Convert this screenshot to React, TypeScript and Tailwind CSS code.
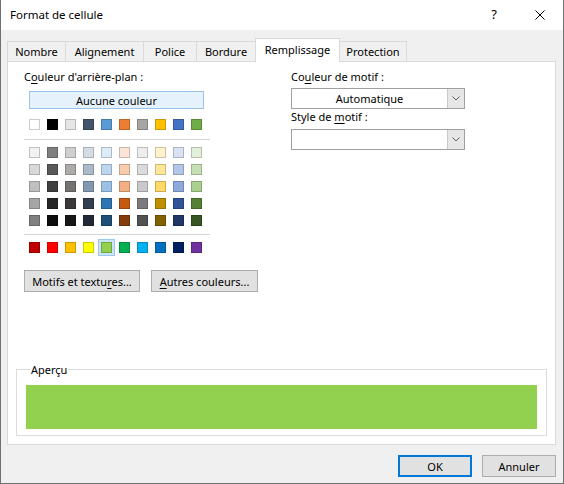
import React from 'react';

const FONT = { fontFamily: '"Segoe UI", "Noto Sans", Arial, sans-serif' };

const TABS = [
  { label: 'Nombre', width: 'w-[59px]' },
  { label: 'Alignement', width: 'w-[79px]' },
  { label: 'Police', width: 'w-[54px]' },
  { label: 'Bordure', width: 'w-[60px]' },
  { label: 'Remplissage', width: 'w-[85px]' },
  { label: 'Protection', width: 'w-[68px]' }
];

const ACTIVE_TAB = 'Remplissage';

const THEME_TOP = ['#FFFFFF', '#000000', '#E7E6E6', '#44546A', '#5B9BD5', '#ED7D31', '#A5A5A5', '#FFC000', '#4472C4', '#70AD47'];

const THEME_SHADES = [
  ['#F2F2F2', '#7F7F7F', '#D0CECE', '#D6DCE4', '#DDEBF7', '#FCE4D6', '#EDEDED', '#FFF2CC', '#D9E1F2', '#E2EFDA'],
  ['#D9D9D9', '#595959', '#AEAAAA', '#ACB9CA', '#BDD7EE', '#F8CBAD', '#DBDBDB', '#FFE699', '#B4C6E7', '#C6E0B4'],
  ['#BFBFBF', '#404040', '#757171', '#8497B0', '#9BC2E6', '#F4B084', '#C9C9C9', '#FFD966', '#8EA9DB', '#A9D08E'],
  ['#A6A6A6', '#262626', '#3A3838', '#333F4F', '#2F75B5', '#C65911', '#7B7B7B', '#BF8F00', '#305496', '#548235'],
  ['#808080', '#0D0D0D', '#161616', '#222B35', '#1F4E78', '#833C0C', '#525252', '#806000', '#203764', '#375623']
];

const STANDARD = ['#C00000', '#FF0000', '#FFC000', '#FFFF00', '#92D050', '#00B050', '#00B0F0', '#0070C0', '#002060', '#7030A0'];

const SELECTED = '#92D050';

export default function App() {
  return (
    <div
      className="flex h-[484px] w-[564px] flex-col overflow-hidden border-x border-b border-[#707070] bg-[#f0f0f0] text-[11px] text-black"
      style={FONT}
    >
      <TitleBar />

      <div className="ml-[6px] mt-[8px] flex items-end">
        {TABS.map((tab, index) => {
          const active = tab.label === ACTIVE_TAB;
          return (
            <div
              key={tab.label}
              className={[
                'relative flex items-center justify-center border border-b-0 border-[#d9d9d9] leading-none',
                tab.width,
                index > 0 ? '-ml-px' : '',
                active ? 'z-10 -mb-px h-[24px] bg-white pb-[2px]' : 'h-[20px] bg-[#f0f0f0]'
              ].join(' ')}
            >
              {tab.label}
            </div>
          );
        })}
      </div>

      <section className="ml-[6px] flex h-[384px] w-[549px] flex-col border border-[#d9d9d9] bg-white">
        <div className="flex pl-[16px] pt-[7px]">
          <BackgroundColumn />
          <PatternColumn />
        </div>

        <fieldset className="mx-[8px] mb-[8px] mt-auto border border-[#dcdcdc] px-[9px] pb-[6px]">
          <legend className="ml-[4px] px-px leading-[15px]">Aperçu</legend>
          <div className="mt-[8px] h-[44px] bg-[#92D050]" />
        </fieldset>
      </section>

      <div className="mt-[10px] flex justify-end gap-[10px] pr-[7px]">
        <button type="button" className="h-[22px] w-[74px] border-2 border-[#0078d7] bg-[#e1e1e1] leading-none">
          OK
        </button>
        <button type="button" className="h-[22px] w-[74px] border border-[#adadad] bg-[#e1e1e1] leading-none">
          Annuler
        </button>
      </div>
    </div>
  );
}

function TitleBar() {
  return (
    <header className="flex h-[30px] items-center bg-white">
      <span className="ml-[9px] flex-1 text-[11.5px]">Format de cellule</span>
      <span className="flex h-[30px] w-[46px] items-center justify-center text-[13px]">?</span>
      <span className="flex h-[30px] w-[46px] items-center justify-center">
        <svg width="10" height="10" viewBox="0 0 10 10" fill="none" stroke="#000" strokeWidth="1">
          <path d="M0.5 0.5 L9.5 9.5 M9.5 0.5 L0.5 9.5" />
        </svg>
      </span>
    </header>
  );
}

function BackgroundColumn() {
  return (
    <div className="flex w-[186px] flex-col">
      <p className="h-[16px] leading-[16px]">
        C<u className="underline-offset-2">o</u>uleur d'arrière-plan :
      </p>

      <div className="ml-[5px] mt-[6px] flex h-[18px] w-[175px] items-center justify-center border border-[#99c3ea] bg-[#e5f1fb] leading-none">
        Aucune couleur
      </div>

      <SwatchRow colors={THEME_TOP} className="mt-[10px]" />

      <div className="mt-[9px] h-px bg-[#d4d4d4]" />

      <div className="mt-[7px] flex flex-col gap-[6px]">
        {THEME_SHADES.map((row, index) => (
          <SwatchRow key={index} colors={row} />
        ))}
      </div>

      <div className="mt-[8px] h-px bg-[#d4d4d4]" />

      <SwatchRow colors={STANDARD} className="mt-[7px]" />

      <div className="mt-[17px] flex gap-[11px]">
        <button type="button" className="h-[22px] w-[116px] shrink-0 border border-[#adadad] bg-[#e1e1e1] leading-none">
          Motifs et textu<u className="underline-offset-2">r</u>es...
        </button>
        <button type="button" className="h-[22px] w-[107px] shrink-0 border border-[#adadad] bg-[#e1e1e1] leading-none">
          <u className="underline-offset-2">A</u>utres couleurs...
        </button>
      </div>
    </div>
  );
}

function SwatchRow({ colors, className = '' }: { colors: string[]; className?: string }) {
  return (
    <div className={['ml-[5px] flex h-[11px] gap-[7px]', className].join(' ')}>
      {colors.map((color, index) => {
        const selected = color === SELECTED && colors === STANDARD;
        return (
          <div key={index} className="relative h-[11px] w-[11px] shrink-0">
            {selected ? (
              <div className="absolute -inset-[3px] border border-[#99c9ef] bg-[#cce4f7]" />
            ) : null}
            <div
              className="relative h-[11px] w-[11px] border border-black/20"
              style={{ backgroundColor: color }}
            />
          </div>
        );
      })}
    </div>
  );
}

function PatternColumn() {
  return (
    <div className="ml-[81px] flex w-[174px] flex-col">
      <p className="h-[16px] leading-[16px]">
        Co<u className="underline-offset-2">u</u>leur de motif :
      </p>
      <Dropdown value="Automatique" className="mt-[3px]" />
      <p className="mt-0 h-[16px] leading-[16px]">
        Style de <u className="underline-offset-2">m</u>otif :
      </p>
      <Dropdown value="" className="mt-[4px]" />
    </div>
  );
}

function Dropdown({ value, className = '' }: { value: string; className?: string }) {
  return (
    <div className={['flex h-[21px] w-[174px] border border-[#a0a0a0] bg-white', className].join(' ')}>
      <div className="flex flex-1 items-center justify-center leading-none">{value}</div>
      <div className="flex w-[17px] items-center justify-center border-l border-[#c8c8c8] bg-[#e6e6e6]">
        <svg width="8" height="5" viewBox="0 0 8 5" fill="none" stroke="#606060" strokeWidth="1">
          <path d="M0.5 0.5 L4 4 L7.5 0.5" />
        </svg>
      </div>
    </div>
  );
}
